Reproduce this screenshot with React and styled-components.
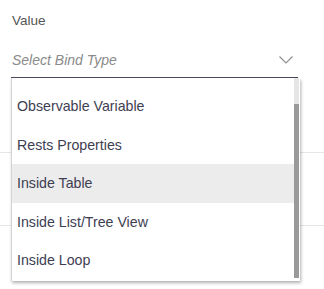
import React from "react";
import styled, { createGlobalStyle } from "styled-components";

const GlobalStyle = createGlobalStyle`
  body {
    margin: 0;
    background: #fff;
    font-family: "Liberation Sans", Arial, sans-serif;
  }
`;

const Page = styled.div`
  position: relative;
  width: 324px;
  height: 289px;
  overflow: hidden;
`;

const Field = styled.div`
  padding: 13px 26px 0 11px;
`;

const Label = styled.div`
  font-size: 13.5px;
  color: #555;
  line-height: 16px;
  padding-left: 1px;
`;

const SelectBox = styled.div`
  position: relative;
  margin-top: 17px;
  height: 31px;
  display: flex;
  align-items: center;
  justify-content: space-between;
  border-bottom: 1px solid #4a4a5c;
`;

const Placeholder = styled.span`
  font-size: 14px;
  font-style: italic;
  color: #8a8a8a;
  padding-left: 1px;
  margin-top: -3px;
`;

const Chevron = styled.svg`
  width: 14px;
  height: 8px;
  margin-right: 5px;
  margin-top: -3px;
`;

const Divider = styled.div`
  height: ${(p) => p.$h}px;
  border-bottom: 1px solid #e6e6e6;
`;

const Menu = styled.div`
  position: absolute;
  top: calc(100% + 1px);
  left: 0;
  width: 288px;
  height: 200px;
  display: flex;
  padding-bottom: 3px;
  background: #fff;
  border-left: 1px solid #d4d4d4;
  box-shadow: 1px 2px 3px rgba(0, 0, 0, 0.3);
  z-index: 2;
`;

const List = styled.ul`
  flex: 1;
  list-style: none;
  margin: 0;
  padding: 9px 0 0;
  overflow: hidden;
`;

const Item = styled.li`
  height: 38.5px;
  display: flex;
  align-items: center;
  padding-left: 5px;
  font-size: 14.2px;
  color: #3e3e52;
  background: ${(p) => (p.$active ? "#ececec" : "#fff")};
`;

const Track = styled.div`
  width: 5px;
  margin-right: 1px;
  background: #e6e6e6;
  display: flex;
  flex-direction: column;
`;

const Thumb = styled.div`
  margin-top: ${(p) => p.$offset}px;
  flex: 1;
  background: #9a9a9a;
`;

const options = [
  "Observable Variable",
  "Rests Properties",
  "Inside Table",
  "Inside List/Tree View",
  "Inside Loop",
];

export default function App() {
  return (
    <Page>
      <GlobalStyle />
      <Field>
        <Label>Value</Label>
        <SelectBox>
          <Placeholder>Select Bind Type</Placeholder>
          <Chevron viewBox="0 0 14 8">
            <path d="M0.5 0.5 L7 7 L13.5 0.5" fill="none" stroke="#8c8c8c" strokeWidth="1.1" />
          </Chevron>
          <Menu>
            <List>
              {options.map((o) => (
                <Item key={o} $active={o === "Inside Table"}>
                  {o}
                </Item>
              ))}
            </List>
            <Track>
              <Thumb $offset={26} />
            </Track>
          </Menu>
        </SelectBox>
      </Field>
      <Divider $h={74} />
      <Divider $h={72} />
    </Page>
  );
}
